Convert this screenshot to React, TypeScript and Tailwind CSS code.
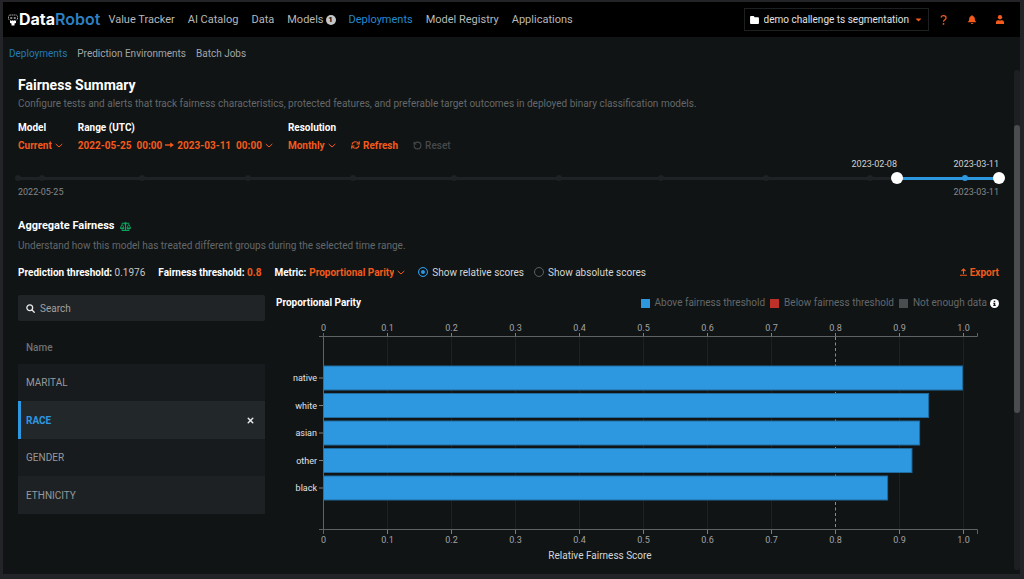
import { useState } from "react";
import type { ReactNode } from "react";
import { FaBalanceScale, FaBell, FaCaretDown } from "react-icons/fa";
import { RotateCcw, X } from "lucide-react";

const NAV = ["Value Tracker", "AI Catalog", "Data", "Models", "Deployments", "Model Registry", "Applications"];
const SUBNAV = ["Deployments", "Prediction Environments", "Batch Jobs"];
const FEATURES = ["MARITAL", "RACE", "GENDER", "ETHNICITY"];
const TIMELINE_END = 981;
const TIMELINE_MARKS = [0, 24, 124, 230, 335, 436, 541, 643, 748, 852, 947];
const SCORES = [
  { group: "native", score: 1 },
  { group: "white", score: 0.947 },
  { group: "asian", score: 0.933 },
  { group: "other", score: 0.921 },
  { group: "black", score: 0.883 },
];

function RobotIcon() {
  return (
    <svg viewBox="0 0 20 24" className="h-3 w-[10px] shrink-0" fill="none" aria-hidden="true">
      <path d="M3 2h14l2 3v5l-3 3H4l-3-3V5z" stroke="#c8c8c8" strokeWidth="1.6" strokeDasharray="3 1" />
      <path d="M4.500 6.500h4v3h-4zM11.500 6.500h4v3h-4z" fill="#b0b0b0" />
      <path d="M4 14h12v4l-3 1v4H7v-4l-3-1z" fill="#fff" />
    </svg>
  );
}

function Logo() {
  return (
    <a href="#home" aria-label="DataRobot" className="flex items-center gap-px font-['Inter'] text-[16px] leading-[19px] font-bold text-white">
      <RobotIcon />
      <span>
        Data<span className="font-semibold text-[#2d7fc1]">Robot</span>
      </span>
    </a>
  );
}

function FolderIcon() {
  return (
    <svg viewBox="0 0 20 18" className="h-2 w-[9px] shrink-0" aria-hidden="true">
      <path d="M2 0h6l2.500 3H18a2 2 0 0 1 2 2v11a2 2 0 0 1-2 2H2a2 2 0 0 1-2-2V2a2 2 0 0 1 2-2z" fill="#fff" />
    </svg>
  );
}

function HelpIcon() {
  return (
    <svg viewBox="0 0 12 18" className="h-[10px] w-[7px]" fill="none" aria-hidden="true">
      <path d="M1.500 4.500C2 2.500 3.800 1.300 6 1.300c2.700 0 4.600 1.500 4.600 3.900 0 3.300-4.600 3.100-4.600 6.800" stroke="currentColor" strokeWidth="2.200" />
      <circle cx="6" cy="16" r="1.600" fill="currentColor" />
    </svg>
  );
}

function UserIcon() {
  return (
    <svg viewBox="0 0 16 18" className="h-[9px] w-2" fill="currentColor" aria-hidden="true">
      <circle cx="8" cy="4.500" r="4.300" />
      <path d="M4 10.500h1.500a6 6 0 0 0 5 0H12a4 4 0 0 1 4 4V18H0v-3.500a4 4 0 0 1 4-4z" />
    </svg>
  );
}

function ArrowIcon() {
  return (
    <svg viewBox="0 0 18 12" className="h-[6px] w-[9px]" fill="none" stroke="currentColor" strokeWidth="2.800" aria-hidden="true">
      <path d="M0 6h15" />
      <path d="M11 1.500 17 6l-6 4.500z" fill="currentColor" strokeWidth="1" />
    </svg>
  );
}

function ChevronIcon() {
  return (
    <svg viewBox="0 0 16 10" className="h-[5px] w-2" fill="none" stroke="currentColor" strokeWidth="2" strokeLinecap="round" aria-hidden="true">
      <path d="M2 2.500 8 8l6-5.500" />
    </svg>
  );
}

function SearchIcon() {
  return (
    <svg viewBox="0 0 18 18" className="size-[9px] shrink-0" fill="none" stroke="#e8e8e8" strokeWidth="2.600" strokeLinecap="round" aria-hidden="true">
      <circle cx="7.500" cy="7.500" r="5.800" />
      <path d="m12 12 4.500 4.500" />
    </svg>
  );
}

function RefreshIcon() {
  return (
    <svg viewBox="0 0 18 16" className="h-2 w-[9px]" fill="none" stroke="currentColor" strokeWidth="2.200" aria-hidden="true">
      <path d="M2 7C3 3.500 6 1.500 9 1.500c2.500 0 4.500 1 6 3M16.500 .5v5.500H11M16 9c-1 3.500-4 5.500-7 5.500-2.500 0-4.500-1-6-3M1.500 15.500V10H7" />
    </svg>
  );
}

function ExportIcon() {
  return (
    <svg viewBox="0 0 14 16" className="h-2 w-[7px]" fill="none" stroke="currentColor" strokeWidth="2.200" aria-hidden="true">
      <path d="M7 12V2M3 6l4-4 4 4M0 14.500h14" />
    </svg>
  );
}

function InfoIcon() {
  return (
    <svg viewBox="0 0 18 18" className="h-[9px] w-[9px]" aria-hidden="true">
      <circle cx="9" cy="9" r="9" fill="#fff" />
      <path d="M7.500 3.500h3v2.500h-3zM6.500 7.500h4V12h1v2h-5v-2h1V9.500h-1z" fill="#101415" />
    </svg>
  );
}

function Dropdown({ label, options }: { label: string; options: string[] }) {
  return (
    <span className="flex items-center gap-[3px] text-[#f45a1c]">
      <select aria-label={label} className="field-sizing-content appearance-none bg-transparent font-bold outline-none">
        {options.map((option) => (
          <option key={option}>{option}</option>
        ))}
      </select>
      <ChevronIcon />
    </span>
  );
}

function Field({ title, children }: { title: string; children: ReactNode }) {
  return (
    <div className="flex flex-col">
      <span className="leading-4 font-bold text-white">{title}</span>
      <div className="flex h-[18px] items-center">{children}</div>
    </div>
  );
}

function TopBar() {
  return (
    <header className="flex h-[35px] items-center bg-black pr-4 pl-[5px]">
      <Logo />
      <nav aria-label="Main" className="ml-2 flex items-center gap-[13px] text-[11px] leading-[19px] text-[#b6b8b9]">
        {NAV.map((item) => (
          <a key={item} href="#" className={item === "Deployments" ? "text-[#2389cf]" : "flex items-center gap-[2px]"}>
            {item}
            {item === "Models" && (
              <span className="flex size-[10px] items-center justify-center rounded-full bg-[#c4c6c7] text-[8px] font-bold text-black">1</span>
            )}
          </a>
        ))}
      </nav>
      <div className="ml-auto flex items-center text-[#f45a1c]">
        <label className="flex h-[23px] items-center gap-[5px] border border-[#1d2021] px-[5px]">
          <FolderIcon />
          <select aria-label="Project" className="field-sizing-content appearance-none bg-transparent text-[10px] text-[#e0e2e3] outline-none">
            <option>demo challenge ts segmentation</option>
          </select>
          <FaCaretDown className="size-[9px]" />
        </label>
        <button type="button" aria-label="Help" className="ml-[11px] flex w-[7px] justify-center">
          <HelpIcon />
        </button>
        <button type="button" aria-label="Notifications" className="ml-[21px] flex w-2 justify-center">
          <FaBell className="size-[9px]" />
        </button>
        <button type="button" aria-label="Account" className="ml-5 flex w-2 justify-center">
          <UserIcon />
        </button>
      </div>
    </header>
  );
}

const THUMB =
  "pointer-events-none absolute inset-x-[-6px] top-0 h-3 appearance-none bg-transparent outline-none [&::-webkit-slider-thumb]:pointer-events-auto [&::-webkit-slider-thumb]:size-3 [&::-webkit-slider-thumb]:appearance-none [&::-webkit-slider-thumb]:rounded-full [&::-webkit-slider-thumb]:bg-white";

function Timeline() {
  const [from, setFrom] = useState(879);
  const [to, setTo] = useState(TIMELINE_END);
  const pct = (n: number) => `${(n / TIMELINE_END) * 100}%`;
  return (
    <div className="mt-[2px] text-[9px] leading-4">
      <div className="relative flex h-4 justify-end text-[#d0d2d3]">
        <span className="absolute -translate-x-full" style={{ left: pct(from) }}>
          2023-02-08
        </span>
        <span>2023-03-11</span>
      </div>
      <div className="relative flex h-3 items-center">
        <div className="h-[3px] flex-1 bg-[#1e2224]" />
        <div className="absolute h-[3px] bg-[#2d98e0]" style={{ left: pct(from), width: pct(to - from) }} />
        {TIMELINE_MARKS.map((mark) => (
          <span
            key={mark}
            className={`absolute size-[6px] -translate-x-1/2 rounded-full ${mark > from ? "bg-[#2d98e0]" : "bg-[#1e2224]"}`}
            style={{ left: pct(mark) }}
          />
        ))}
        <input type="range" aria-label="Range start" min={0} max={TIMELINE_END} value={from} onChange={(e) => setFrom(Math.min(+e.target.value, to))} className={THUMB} />
        <input type="range" aria-label="Range end" min={0} max={TIMELINE_END} value={to} onChange={(e) => setTo(Math.max(+e.target.value, from))} className={THUMB} />
      </div>
      <div className="flex justify-between text-[#84888a]">
        <span>2022-05-25</span>
        <span>2023-03-11</span>
      </div>
    </div>
  );
}

function ScoreRadio({ label, checked, onChange }: { label: string; checked: boolean; onChange: () => void }) {
  return (
    <label className="flex items-center gap-1 text-[#d4d6d7]">
      <input
        type="radio"
        name="scores"
        checked={checked}
        onChange={onChange}
        className="size-[10px] appearance-none rounded-full border border-[#5c6062] checked:border-[#2d98e0] checked:bg-[#2d98e0] checked:inset-ring-2 checked:inset-ring-[#101415]"
      />
      {label}
    </label>
  );
}

function FeaturePicker() {
  const [selected, setSelected] = useState("RACE");
  return (
    <aside className="w-[247px] shrink-0 text-[10px]">
      <label className="flex h-[26px] items-center gap-[5px] rounded-[2px] bg-[#202426] px-2">
        <SearchIcon />
        <input type="search" aria-label="Search features" placeholder="Search" className="min-w-0 flex-1 bg-transparent text-white outline-none placeholder:text-[#9ea1a3]" />
      </label>
      <table className="mt-[10px] w-full">
        <thead>
          <tr>
            <th scope="col" className="h-[33px] px-2 text-left font-medium text-[#6d7173]">
              Name
            </th>
          </tr>
        </thead>
        <tbody>
          {FEATURES.map((feature) => {
            const active = feature === selected;
            return (
              <tr key={feature} className={active ? "h-[38px] bg-[#22272a]" : "h-[37px] bg-[#171b1d] even:h-[38px] even:bg-[#1d2123]"}>
                <td className={`p-0 ${active ? "shadow-[inset_3px_0_0_#2d98e0]" : ""}`}>
                  <div className="flex items-center justify-between pr-[10px] pl-2">
                    <button type="button" onClick={() => setSelected(feature)} className={active ? "font-bold text-[#2d98e0]" : "text-[#96999b]"}>
                      {feature}
                    </button>
                    {active && (
                      <button type="button" aria-label={`Clear ${feature}`} onClick={() => setSelected("")}>
                        <X className="size-[9px] text-[#e8e8e8]" strokeWidth={4} />
                      </button>
                    )}
                  </div>
                </td>
              </tr>
            );
          })}
        </tbody>
      </table>
    </aside>
  );
}

function LegendItem({ swatch, label }: { swatch: string; label: string }) {
  return (
    <span className="flex items-center gap-[5px]">
      <span className={`size-[9px] ${swatch}`} />
      {label}
    </span>
  );
}

function FairnessChart() {
  const left = 47;
  const unit = 640;
  const ticks = Array.from({ length: 11 }, (_, i) => i / 10);
  const name = (t: number) => (t === 0 ? "0" : t.toFixed(1));
  return (
    <svg viewBox="0 0 723 255" className="mt-[5px] block w-full font-['Roboto'] text-[9px]" role="img" aria-label="Relative fairness score by group">
      {ticks.map((t) => {
        const x = Math.round(left + t * unit) + 0.5;
        return (
          <g key={t}>
            {t > 0 && t !== 0.8 && <path d={`M${x} 22V215`} stroke="#1d2122" />}
            <path d={`M${x} 18V21M${x} 215V219`} stroke="#7b7f81" />
            <text x={x} y={16} textAnchor="middle" fill="#a0a3a5">{name(t)}</text>
            <text x={x} y={228} textAnchor="middle" fill="#a0a3a5">{name(t)}</text>
          </g>
        );
      })}
      <path d={`M${left + 0.8 * unit + 0.5} 22V215`} stroke="#8a8d8f" strokeDasharray="3 2.500" />
      <path d="M43 21.500H701.500V18M43 214.500H701.500V219" fill="none" stroke="#5f6365" />
      {SCORES.map(({ group, score }, i) => {
        const y = 50.5 + i * 27.5;
        return (
          <g key={group}>
            <rect x={left + 0.5} y={y + 0.5} width={score * unit - 1} height={24} fill="#2d98e0" stroke="#206c9f" />
            <path d={`M43 ${y + 12.5}h4`} stroke="#7b7f81" />
            <text x={41} y={y + 15.5} textAnchor="end" fill="#e2e3e4">{group}</text>
          </g>
        );
      })}
      <path d="M47.500 18V219" stroke="#5f6365" />
      <text x={324} y={244} textAnchor="middle" fontSize="10" fill="#d4d6d7">Relative Fairness Score</text>
    </svg>
  );
}

export default function App() {
  const [mode, setMode] = useState("relative");
  return (
    <div className="flex min-h-screen flex-col bg-[#232427] pt-[2px] pr-1 pb-[5px] pl-[3px] font-['Roboto',sans-serif] text-[10px]">
      <TopBar />
      <div className="flex flex-1 flex-col bg-[#101415]">
        <nav aria-label="Deployments" className="flex h-[33px] items-center gap-[10px] px-[6px] text-[#a2a5a7]">
          {SUBNAV.map((item) => (
            <a key={item} href="#" className={item === "Deployments" ? "text-[#2579b5]" : ""}>
              {item}
            </a>
          ))}
        </nav>
        <div className="flex flex-1">
          <main className="min-w-0 flex-1 px-[15px] pt-[5px]">
            <h1 className="text-[14px] leading-5 font-bold text-white">Fairness Summary</h1>
            <p className="mt-px leading-4 text-[#64686a]">
              Configure tests and alerts that track fairness characteristics, protected features, and preferable target outcomes in deployed binary classification models.
            </p>
            <div className="mt-2 flex items-end gap-[15px]">
              <Field title="Model">
                <Dropdown label="Model" options={["Current", "Previous"]} />
              </Field>
              <Field title="Range (UTC)">
                <button type="button" className="flex items-center gap-[3px] font-bold text-[#f45a1c]">
                  <span className="flex gap-[5px]">
                    <span>2022-05-25</span>
                    <span>00:00</span>
                  </span>
                  <ArrowIcon />
                  <span className="flex gap-[5px]">
                    <span>2023-03-11</span>
                    <span>00:00</span>
                  </span>
                  <ChevronIcon />
                </button>
              </Field>
              <Field title="Resolution">
                <Dropdown label="Resolution" options={["Monthly", "Weekly", "Daily"]} />
              </Field>
              <button type="button" className="flex h-[18px] items-center gap-[3px] font-bold text-[#f45a1c]">
                <RefreshIcon />
                Refresh
              </button>
              <button type="button" disabled className="flex h-[18px] items-center gap-[3px] font-medium text-[#45494b]">
                <RotateCcw className="size-[9px]" strokeWidth={3} />
                Reset
              </button>
            </div>
            <Timeline />
            <h2 className="mt-4 flex items-center gap-[6px] text-[11px] leading-5 font-bold text-white">
              Aggregate Fairness
              <FaBalanceScale className="size-[11px] text-[#0ba35c]" />
            </h2>
            <p className="mt-[2px] leading-4 text-[#64686a]">Understand how this model has treated different groups during the selected time range.</p>
            <div className="mt-[10px] flex h-4 items-center gap-[13px]">
              <span className="text-[#c4c6c7]">
                <b className="text-white">Prediction threshold:</b> 0.1976
              </span>
              <span className="font-bold text-white">
                Fairness threshold: <span className="text-[#f45a1c]">0.8</span>
              </span>
              <span className="flex items-center gap-[3px] font-bold text-white">
                Metric:
                <Dropdown label="Metric" options={["Proportional Parity", "Equal Parity"]} />
              </span>
              <fieldset className="flex gap-[10px]">
                <ScoreRadio label="Show relative scores" checked={mode === "relative"} onChange={() => setMode("relative")} />
                <ScoreRadio label="Show absolute scores" checked={mode === "absolute"} onChange={() => setMode("absolute")} />
              </fieldset>
              <button type="button" className="ml-auto flex items-center gap-[3px] font-bold text-[#f45a1c]">
                <ExportIcon />
                Export
              </button>
            </div>
            <div className="mt-[15px] flex gap-[11px]">
              <FeaturePicker />
              <section className="min-w-0 flex-1 pt-px">
                <div className="flex items-center justify-between leading-[14px]">
                  <h3 className="font-bold text-white">Proportional Parity</h3>
                  <div className="flex items-center gap-[5px] text-[#64686a]">
                    <LegendItem swatch="bg-[#2d98e0]" label="Above fairness threshold" />
                    <LegendItem swatch="bg-[#bd3129]" label="Below fairness threshold" />
                    <LegendItem swatch="bg-[#494d4f]" label="Not enough data" />
                    <button type="button" aria-label="About the legend" className="-ml-[2px]">
                      <InfoIcon />
                    </button>
                  </div>
                </div>
                <FairnessChart />
              </section>
            </div>
          </main>
          <div className="mb-1 w-[6px] rounded-full bg-[#1e1f22] pt-[55px]" aria-hidden="true">
            <div className="h-72 rounded-full bg-[#4b4c4f]" />
          </div>
        </div>
      </div>
    </div>
  );
}
